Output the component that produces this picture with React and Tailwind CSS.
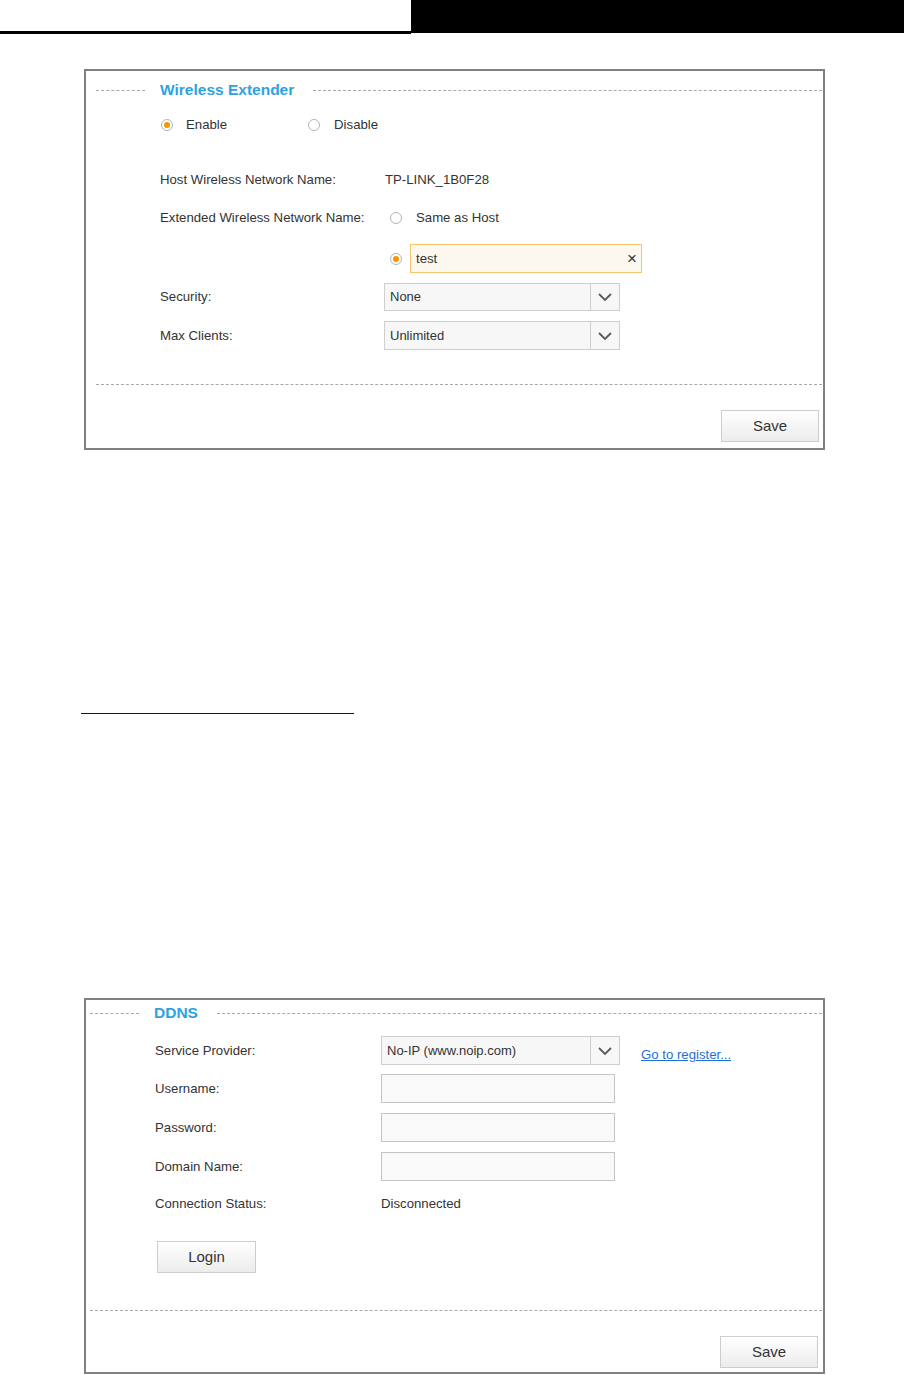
import React from 'react';

const font = { fontFamily: '"Liberation Sans", Arial, sans-serif' };

function Radio({ checked }) {
  return (
    <span className="w-3 h-3 rounded-full border border-[#b5b5b5] bg-white flex items-center justify-center shrink-0">
      {checked && <span className="w-[6px] h-[6px] rounded-full bg-[#f39800]" />}
    </span>
  );
}

function Chevron() {
  return (
    <svg width="14" height="8" viewBox="0 0 14 8">
      <polyline points="1,1 7,7 13,1" fill="none" stroke="#5a5a5a" strokeWidth="1.8" />
    </svg>
  );
}

function Select({ value, width }) {
  return (
    <div className={`${width} h-full flex border border-[#cfcfcf] bg-[#f7f7f7]`}>
      <div className="flex-1 flex items-center pl-[5px] text-[13px] text-[#333]">{value}</div>
      <div className="w-[29px] border-l border-[#cfcfcf] flex items-center justify-center">
        <Chevron />
      </div>
    </div>
  );
}

function Button({ label, className }) {
  return (
    <button className={`${className} border border-[#cdcdcd] bg-gradient-to-b from-white to-[#ececec] text-[15px] text-[#333]`}>
      {label}
    </button>
  );
}

function Legend({ title, lead }) {
  return (
    <div className="flex items-center h-4">
      <div className={`${lead} border-t border-dashed border-[#a8a8a8]`} />
      <span className="ml-[15px] mr-[19px] text-[15.5px] font-bold text-[#2ea2df]">{title}</span>
      <div className="flex-1 mr-px border-t border-dashed border-[#a8a8a8]" />
    </div>
  );
}

function Row({ label, children, className, labelW }) {
  return (
    <div className={`flex items-center ${className}`}>
      <div className={`${labelW} shrink-0 text-[13.2px] text-[#333]`}>{label}</div>
      {children}
    </div>
  );
}

export default function App() {
  return (
    <div className="bg-white w-[904px] h-[1375px] overflow-hidden" style={font}>
      {/* page header band */}
      <div className="flex h-[34px]">
        <div className="w-[411px] h-[34px] border-b-[3px] border-black" />
        <div className="flex-1 h-[33px] bg-black" />
      </div>

      {/* Wireless Extender panel */}
      <div className="mt-[35px] ml-[84px] w-[741px] h-[381px] border-2 border-[#808080] flex flex-col">
        <div className="mt-[11px] pl-[10px]">
          <Legend title="Wireless Extender" lead="w-[49px]" />
        </div>

        <div className="ml-[74px] flex flex-col">
          <div className="mt-[17px] h-5 flex items-center text-[13.2px] text-[#333]">
            <span className="ml-px"><Radio checked /></span>
            <span className="ml-[13px]">Enable</span>
            <span className="ml-[81px]"><Radio /></span>
            <span className="ml-[14px]">Disable</span>
          </div>

          <Row label="Host Wireless Network Name:" labelW="w-[225px]" className="mt-[35px] h-5">
            <span className="text-[13.2px] text-[#333]">TP-LINK_1B0F28</span>
          </Row>

          <Row label="Extended Wireless Network Name:" labelW="w-[224px]" className="mt-[18px] h-5">
            <span className="ml-[6px]"><Radio /></span>
            <span className="ml-[14px] text-[13.2px] text-[#333]">Same as Host</span>
          </Row>

          <Row label="" labelW="w-[224px]" className="mt-4 h-[29px]">
            <span className="ml-[6px]"><Radio checked /></span>
            <div className="ml-2 w-[232px] h-full flex items-center justify-between border border-[#f6c56e] bg-[#fdf8ef] pl-[5px] pr-[4px]">
              <span className="text-[13.2px] text-[#333]">test</span>
              <span className="text-[17px] text-[#333] leading-none">×</span>
            </div>
          </Row>

          <Row label="Security:" labelW="w-[224px]" className="mt-[10px] h-[28px]">
            <Select value="None" width="w-[236px]" />
          </Row>

          <Row label="Max Clients:" labelW="w-[224px]" className="mt-[10px] h-[29px]">
            <Select value="Unlimited" width="w-[236px]" />
          </Row>
        </div>

        <div className="mt-[34px] ml-[10px] mr-px border-t border-dashed border-[#a8a8a8]" />

        <div className="mt-[25px] flex justify-end pr-[4px]">
          <Button label="Save" className="w-[98px] h-[32px]" />
        </div>
      </div>

      {/* divider rule */}
      <div className="mt-[263px] ml-[81px] w-[273px] h-px bg-[#0000cc]" />

      {/* DDNS panel */}
      <div className="mt-[284px] ml-[84px] w-[741px] h-[376px] border-2 border-[#808080] flex flex-col">
        <div className="mt-[5px] pl-[4px]">
          <Legend title="DDNS" lead="w-[49px]" />
        </div>

        <div className="ml-[69px] flex flex-col">
          <Row label="Service Provider:" labelW="w-[226px]" className="mt-[15px] h-[29px]">
            <Select value="No-IP (www.noip.com)" width="w-[239px]" />
            <a className="ml-[21px] mt-2 text-[13.2px] text-[#1e6fdb] underline">Go to register...</a>
          </Row>

          <Row label="Username:" labelW="w-[226px]" className="mt-[9px] h-[29px]">
            <div className="w-[234px] h-full border border-[#c4c4c4] bg-[#f9f9f9]" />
          </Row>

          <Row label="Password:" labelW="w-[226px]" className="mt-[10px] h-[29px]">
            <div className="w-[234px] h-full border border-[#c4c4c4] bg-[#f9f9f9]" />
          </Row>

          <Row label="Domain Name:" labelW="w-[226px]" className="mt-[10px] h-[29px]">
            <div className="w-[234px] h-full border border-[#c4c4c4] bg-[#f9f9f9]" />
          </Row>

          <Row label="Connection Status:" labelW="w-[226px]" className="mt-[13px] h-5">
            <span className="text-[13.2px] text-[#333]">Disconnected</span>
          </Row>

          <div className="mt-[27px] ml-[2px]">
            <Button label="Login" className="w-[99px] h-[32px]" />
          </div>
        </div>

        <div className="mt-[37px] ml-[4px] mr-px border-t border-dashed border-[#a8a8a8]" />

        <div className="mt-[25px] flex justify-end pr-[5px]">
          <Button label="Save" className="w-[98px] h-[32px]" />
        </div>
      </div>
    </div>
  );
}
